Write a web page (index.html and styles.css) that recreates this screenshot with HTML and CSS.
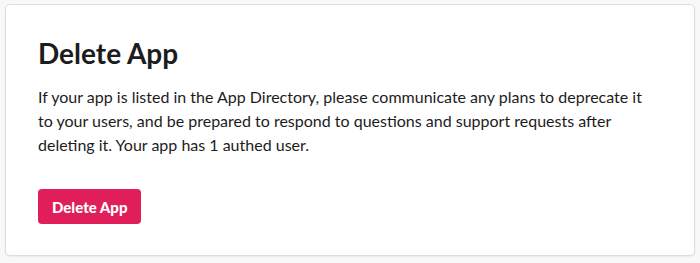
FILE: index.html
```html
<!DOCTYPE html>
<html>
<head>
    <link rel="stylesheet" href="styles.css">
</head>
<body>
    <div class="card">
        <h1>Delete App</h1>
        <p class="card-text">If your app is listed in the App Directory, please communicate any plans to deprecate it to your users, and be prepared to respond to questions and support requests after deleting it. Your app has 1 authed user.</p>
        <button type="button" class="btn-danger">Delete App</button>
    </div>
</body>
</html>
```

FILE: styles.css
```css
:root {
    --slack-red: #e01e5a;
    --text-dark: #1d1c1d;
    --border-gray: #dddddd;
    --page-bg: #f8f8f8;
}

body {
    font-family: Lato, "Open Sans", sans-serif;
    color: var(--text-dark);
    background: var(--page-bg);
    margin: 0;
    padding: 4px 5px;
}

.card {
    background: white;
    border: 1px solid var(--border-gray);
    border-radius: 5px;
    box-shadow: 0 1px 2px rgba(0, 0, 0, 0.06);
    padding: 28px 32px 30px;
    height: 252px;
    box-sizing: border-box;
}

h1 {
    font-size: 28px;
    font-weight: 700;
    margin: 0 0 12px;
    line-height: 40px;
}

.card-text {
    font-size: 16px;
    line-height: 24px;
    max-width: 615px;
    margin: 0 0 32px;
}

.btn-danger {
    background: var(--slack-red);
    color: white;
    border: none;
    border-radius: 4px;
    font-family: inherit;
    font-size: 15px;
    font-weight: 900;
    height: 35px;
    padding: 0 14px;
    cursor: pointer;
}
```
